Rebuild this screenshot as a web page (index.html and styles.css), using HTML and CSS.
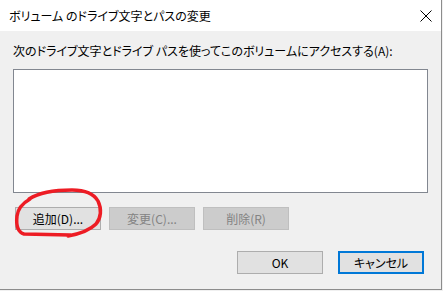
FILE: index.html
```html
<html>
  <head>
    <meta charset="utf-8">
    <link rel="stylesheet" href="styles.css">
  </head>
  <body>
    <div class="dialog">
      <div class="titlebar">
        <span class="title">ボリューム のドライブ文字とパスの変更</span>
        <svg class="close" width="12" height="12" viewBox="0 0 12 12">
          <path d="M0.5 0.5 L11.5 11.5 M11.5 0.5 L0.5 11.5" stroke="#000" stroke-width="1" fill="none"/>
        </svg>
      </div>

      <div class="content">
        <label>次のドライブ文字とドライブ パスを使ってこのボリュームにアクセスする(A):</label>
        <div class="list"></div>

        <div class="actions">
          <button class="btn">追加(D)...</button>
          <button class="btn" disabled>変更(C)...</button>
          <button class="btn" disabled>削除(R)</button>
        </div>

        <div class="footer">
          <button class="btn">OK</button>
          <button class="btn default">キャンセル</button>
        </div>
      </div>

      <!-- hand-drawn marker -->
      <svg class="marker" width="443" height="291" viewBox="0 0 443 291">
        <path d="M29 199 C40 192, 55 190, 72 190 C86 190, 94 194, 98 201 C102 209, 101 218, 96 224 C89 231, 79 234, 68 236 M70 235 L24 234 C17 232, 16 225, 17 216 C18 208, 23 203, 30 199" stroke="#ed1c24" stroke-width="3.5" fill="none" stroke-linecap="round" stroke-linejoin="round"/>
      </svg>
    </div>
  </body>
</html>
```

FILE: styles.css
```css
* {
  box-sizing: border-box;
  margin: 0;
  padding: 0;
}

body {
  background: #f0f0f0;
  font-family: "Noto Sans CJK JP", "Noto Sans", sans-serif;
  font-size: 12px;
  font-feature-settings: "palt" 1;
  color: #000;
}

.dialog {
  position: relative;
  width: 442px;
  height: 290px;
  background: #f0f0f0;
  border-right: 1px solid #8c8c8c;
  border-bottom: 1px solid #8c8c8c;
}

.titlebar {
  height: 31px;
  background: #fff;
  display: flex;
  align-items: center;
  justify-content: space-between;
  padding-left: 9px;
  padding-right: 9px;
}

.title {
  line-height: 16px;
}

.close {
  width: 12px;
  height: 12px;
}

.content {
  padding: 12px 13px 0 13px;
}

label {
  display: block;
  line-height: 16px;
}

.list {
  margin-top: 10px;
  height: 124px;
  background: #fff;
  border: 1px solid #828790;
}

.actions {
  display: flex;
  gap: 8px;
  margin-top: 14px;
  padding-left: 2px;
}

.footer {
  display: flex;
  justify-content: flex-end;
  gap: 15px;
  margin-top: 21px;
  padding-right: 4px;
}

.btn {
  width: 86px;
  height: 23px;
  background: #e1e1e1;
  border: 1px solid #adadad;
  font-family: inherit;
  font-size: 12px;
  font-feature-settings: "palt" 1;
  color: #000;
  outline: none;
}

.btn:disabled {
  background: #cccccc;
  border-color: #bfbfbf;
  color: #838383;
}

.btn.default {
  border: 2px solid #0078d7;
}

.marker {
  position: absolute;
  top: 0;
  left: 0;
  pointer-events: none;
}
```
